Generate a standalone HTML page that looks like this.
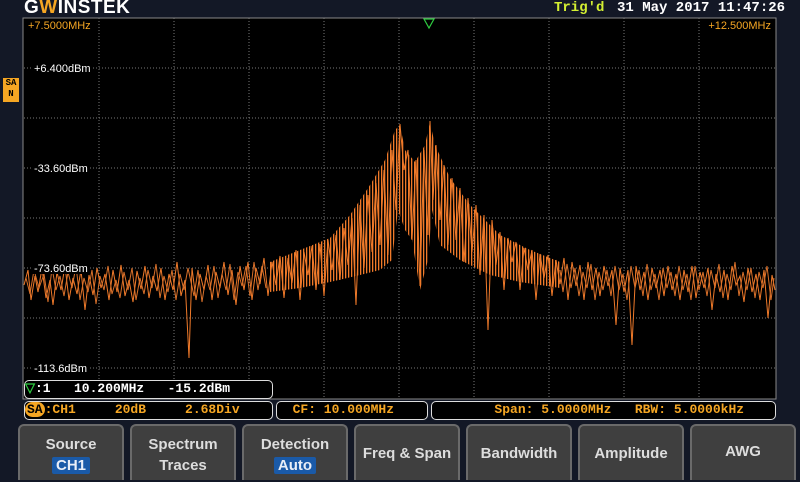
<!DOCTYPE html>
<html><head><meta charset="utf-8"><style>
body{margin:0;width:800px;height:480px;background:#131826;overflow:hidden;position:relative;font-family:"Liberation Sans",sans-serif}
.abs{position:absolute}
.logo{left:24px;top:-3px;color:#fff;font:bold 19px "Liberation Sans",sans-serif;letter-spacing:0.5px}
.mono{font-family:"Liberation Mono",monospace;font-weight:bold}
.box{position:absolute;border:1px solid #ddd;border-radius:5px;background:#000;box-sizing:border-box;font:bold 13px "Liberation Mono",monospace;color:#f5a623;white-space:pre;line-height:16px}
.btn{position:absolute;top:424px;width:106px;height:56px;background:#3f3f3f;border:2px solid #6a6a6a;border-bottom:none;border-radius:6px 6px 0 0;box-sizing:border-box;color:#ddd;font:bold 15px "Liberation Sans",sans-serif;text-align:center}
.hl{background:#1a5aa8;color:#e8eef8;padding:0 4px;border-radius:2px}
</style></head><body>
<div class="abs logo">G<span style="color:#f5a623">W</span>INSTEK</div>
<div class="abs mono" style="left:554px;top:0;color:#d4f032;font-size:14px">Trig'd</div>
<div class="abs mono" style="left:617px;top:0;color:#fff;font-size:14px">31 May 2017 11:47:26</div>
<div class="abs" style="left:3px;top:78px;width:16px;height:24px;background:#f5a623;color:#000;font:bold 9px 'Liberation Mono',monospace;line-height:11px;text-align:center">SA<br>N</div>
<svg class="abs" style="left:0;top:0" width="800" height="420">
<defs><pattern id="st" width="3" height="10" patternUnits="userSpaceOnUse"><rect x="0" y="0" width="1.3" height="10" fill="#f07a2a"/></pattern></defs>
<rect x="23" y="18" width="753" height="381" fill="#000" stroke="#888" stroke-width="1"/>
<g stroke="#777" stroke-dasharray="1,2" stroke-width="1">
<line x1="99" y1="18" x2="99" y2="398"/><line x1="174" y1="18" x2="174" y2="398"/><line x1="249" y1="18" x2="249" y2="398"/><line x1="324" y1="18" x2="324" y2="398"/><line x1="399" y1="18" x2="399" y2="398"/><line x1="474" y1="18" x2="474" y2="398"/><line x1="549" y1="18" x2="549" y2="398"/><line x1="624" y1="18" x2="624" y2="398"/><line x1="699" y1="18" x2="699" y2="398"/>
<line x1="24" y1="68" x2="775" y2="68"/><line x1="24" y1="118" x2="775" y2="118"/><line x1="24" y1="168" x2="775" y2="168"/><line x1="24" y1="218" x2="775" y2="218"/><line x1="24" y1="268" x2="775" y2="268"/><line x1="24" y1="318" x2="775" y2="318"/><line x1="24" y1="368" x2="775" y2="368"/>
</g>
<polygon points="424,19 434,19 429,28" fill="none" stroke="#2ecc40" stroke-width="1.2"/>
<text x="28" y="29" fill="#f5a623" font-family="Liberation Sans" font-size="11">+7.5000MHz</text>
<text x="771" y="29" fill="#f5a623" font-family="Liberation Sans" font-size="11" text-anchor="end">+12.500MHz</text>
<polygon fill="url(#st)" points="270,262 300,250 330,238 350,215 370,185 385,160 395,130 400,125 405,150 415,162 425,145 430,122 435,145 450,178 470,205 500,235 530,250 560,262 560,288 520,282 490,275 460,260 440,245 432,210 428,260 420,290 412,240 405,230 398,210 392,260 380,270 360,275 330,282 300,288 270,292"/>
<polyline fill="none" stroke="#f07a2a" stroke-width="1" points="24,285 28,270 31,300 35,276 38,292 42,268 46,298 50,280 53,305 57,272 61,290 65,266 69,300 73,278 77,294 81,270 85,310 89,275 93,295 97,268 101,288 105,274 109,300 113,270 117,292 121,265 125,296 129,280 133,302 137,271 141,289 145,266 149,298 153,276 157,291 161,268 165,300 169,274 173,290 177,262 181,296 185,280 189,358 192,268 196,300 200,274 204,290 208,265 212,300 216,272 220,288 224,262 228,295 232,270 236,305 240,266 244,290 248,262 252,300 256,268 260,284 264,258 268,296 272,262 276,285 280,256 284,298 288,258 292,283 296,250 300,300 304,252 308,275 312,246 316,290 320,244 324,296 328,240 332,270 336,235 340,280 344,228 348,265 352,218 356,305 360,205 364,268 368,195 372,252 376,183 380,245 384,170 388,255 392,150 396,210 400,124 404,170 408,150 412,240 416,160 420,286 424,150 428,235 430,121 433,200 436,145 440,220 444,165 448,245 452,178 456,240 460,188 464,262 468,198 472,252 476,205 480,275 484,215 488,330 492,220 496,265 500,232 504,290 508,238 512,262 516,242 520,290 524,248 528,270 532,250 536,300 540,254 544,278 548,255 552,296 556,260 560,284 564,258 568,300 572,262 576,286 580,265 584,300 588,262 592,290 596,268 600,296 604,266 608,286 612,270 616,325 620,268 624,292 628,270 632,345 636,266 640,290 644,272 648,300 652,268 656,288 660,270 664,296 668,266 672,290 676,274 680,300 684,270 688,292 692,266 696,298 700,272 704,288 708,268 712,310 716,274 720,292 724,270 728,300 732,266 736,285 740,276 744,302 748,268 752,292 756,274 760,300 764,270 768,318 772,275 775,290"/>
<polyline fill="none" stroke="#d9702a" stroke-width="1" points="26,278 30,294 34,270 39,288 44,274 48,302 52,268 56,290 60,276 64,296 68,272 72,288 76,266 80,300 84,278 88,292 92,270 96,304 100,276 104,290 108,266 112,294 116,280 120,298 124,272 128,290 132,268 136,300 140,278 144,294 148,270 152,288 156,264 160,298 164,276 168,292 172,270 176,300 180,274 184,290 188,268 194,296 198,270 202,302 206,276 210,290 214,266 218,298 222,274 226,290 230,264 234,300 238,272 242,286 246,266 250,296 254,262 258,290 262,266 266,288"/>
<polyline fill="none" stroke="#d9702a" stroke-width="1" points="560,270 563,292 567,264 571,288 575,268 579,296 583,272 587,288 591,264 595,300 599,272 603,290 607,270 611,296 615,266 619,290 623,274 627,300 631,266 635,288 639,270 643,296 647,264 651,290 655,274 659,300 663,268 667,288 671,272 675,296 679,266 683,290 687,274 691,300 695,266 699,290 703,272 707,296 711,270 715,288 719,264 723,298 727,274 731,290 735,262 739,296 743,272 747,290 751,268 755,298 759,272 763,288 767,266 771,300 774,278"/>
<g font-family="Liberation Sans" font-size="11">
<rect x="31" y="62" width="60" height="12" fill="#000"/><rect x="31" y="162" width="58" height="12" fill="#000"/><rect x="31" y="262" width="58" height="12" fill="#000"/><rect x="31" y="362" width="58" height="12" fill="#000"/>
<g fill="#fff"><text x="34" y="72">+6.400dBm</text><text x="34" y="172">-33.60dBm</text>
<text x="34" y="272">-73.60dBm</text><text x="34" y="372">-113.6dBm</text></g></g>
</svg>
<div class="box" style="left:24px;top:380px;width:249px;height:19px;color:#fff"><span style="color:#2ecc40">▽</span>:1   10.200MHz   -15.2dBm</div>
<div class="box" style="left:24px;top:401px;width:249px;height:19px"><span style="background:#f5a623;color:#000;border-radius:8px;padding:0 2px">SA</span>:CH1     20dB     2.68Div</div>
<div class="box" style="left:276px;top:401px;width:152px;height:19px">  CF: 10.000MHz</div>
<div class="box" style="left:431px;top:401px;width:345px;height:19px">        Span: 5.0000MHz   RBW: 5.0000kHz</div>
<div class="btn" style="left:18px;padding-top:8px;line-height:21px">Source<br><span class="hl">CH1</span></div>
<div class="btn" style="left:130px;padding-top:8px;line-height:21px">Spectrum<br>Traces</div>
<div class="btn" style="left:242px;padding-top:8px;line-height:21px">Detection<br><span class="hl">Auto</span></div>
<div class="btn" style="left:354px;line-height:56px">Freq &amp; Span</div>
<div class="btn" style="left:466px;line-height:56px">Bandwidth</div>
<div class="btn" style="left:578px;line-height:56px">Amplitude</div>
<div class="btn" style="left:690px;line-height:52px">AWG</div>
</body></html>
